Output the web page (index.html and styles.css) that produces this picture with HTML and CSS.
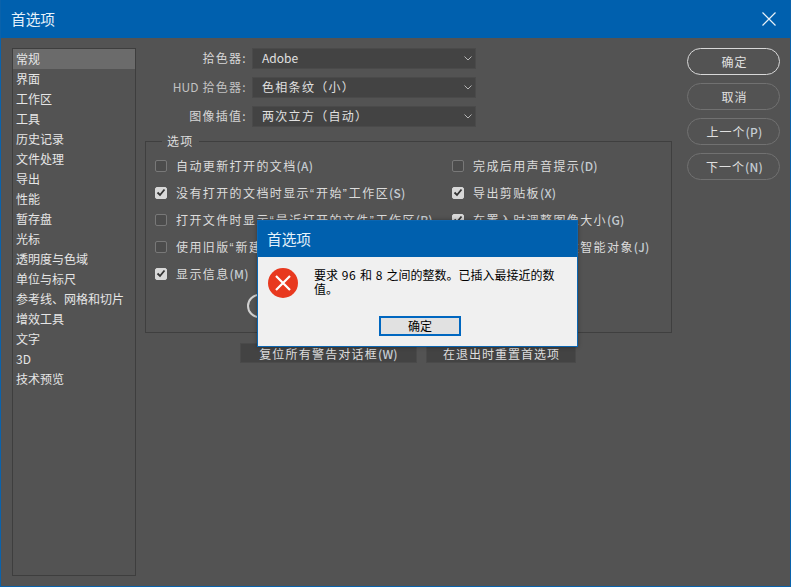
FILE: index.html
```html
<!DOCTYPE html>
<html lang="zh-CN">
<head>
<meta charset="utf-8">
<title>首选项</title>
<link rel="stylesheet" href="styles.css">
</head>
<body>
<div class="window">
  <header class="titlebar">
    <span class="title">首选项</span>
    <svg class="close" width="14" height="14" viewBox="0 0 14 14"><path d="M.5.5l13 13M13.5.5l-13 13" stroke="#e8f1f8" stroke-width="1.2" fill="none"/></svg>
  </header>
  <div class="main">
    <ul class="nav">
      <li class="nav-item selected">常规</li>
      <li class="nav-item">界面</li>
      <li class="nav-item">工作区</li>
      <li class="nav-item">工具</li>
      <li class="nav-item">历史记录</li>
      <li class="nav-item">文件处理</li>
      <li class="nav-item">导出</li>
      <li class="nav-item">性能</li>
      <li class="nav-item">暂存盘</li>
      <li class="nav-item">光标</li>
      <li class="nav-item">透明度与色域</li>
      <li class="nav-item">单位与标尺</li>
      <li class="nav-item">参考线、网格和切片</li>
      <li class="nav-item">增效工具</li>
      <li class="nav-item">文字</li>
      <li class="nav-item">3D</li>
      <li class="nav-item">技术预览</li>
    </ul>
    <section class="content">
      <div class="fields">
        <div class="field">
          <span class="field-label">拾色器:</span>
          <div class="select"><span class="select-text latin">Adobe</span><svg width="8" height="5" viewBox="0 0 8 5"><path d="M.5.5L4 4 7.500.5" stroke="#b5b5b5" fill="none"/></svg></div>
        </div>
        <div class="field">
          <span class="field-label dim"><span class="latin">HUD</span> 拾色器:</span>
          <div class="select"><span class="select-text">色相条纹（小）</span><svg width="8" height="5" viewBox="0 0 8 5"><path d="M.5.5L4 4 7.500.5" stroke="#b5b5b5" fill="none"/></svg></div>
        </div>
        <div class="field">
          <span class="field-label">图像插值:</span>
          <div class="select"><span class="select-text">两次立方（自动）</span><svg width="8" height="5" viewBox="0 0 8 5"><path d="M.5.5L4 4 7.500.5" stroke="#b5b5b5" fill="none"/></svg></div>
        </div>
      </div>
      <fieldset class="options">
        <legend class="legend">选项</legend>
        <div class="option-grid">
          <div class="opt"><span class="check"></span><span>自动更新打开的文档<b>(A)</b></span></div>
          <div class="opt"><span class="check"></span><span>完成后用声音提示<b>(D)</b></span></div>
          <div class="opt"><span class="check on"><svg width="10" height="9" viewBox="0 0 10 9"><path d="M1.500 4.500L4 7l4.500-5.500" stroke="#333" stroke-width="1.800" fill="none"/></svg></span><span>没有打开的文档时显示<span class="q">“</span>开始<span class="q">”</span>工作区<b>(S)</b></span></div>
          <div class="opt"><span class="check on"><svg width="10" height="9" viewBox="0 0 10 9"><path d="M1.500 4.500L4 7l4.500-5.500" stroke="#333" stroke-width="1.800" fill="none"/></svg></span><span>导出剪贴板<b>(X)</b></span></div>
          <div class="opt"><span class="check"></span><span>打开文件时显示<span class="q">“</span>最近打开的文件<span class="q">”</span>工作区<b>(R)</b></span></div>
          <div class="opt"><span class="check on"><svg width="10" height="9" viewBox="0 0 10 9"><path d="M1.500 4.500L4 7l4.500-5.500" stroke="#333" stroke-width="1.800" fill="none"/></svg></span><span>在置入时调整图像大小<b>(G)</b></span></div>
          <div class="opt"><span class="check"></span><span>使用旧版<span class="q">“</span>新建文档<span class="q">”</span>界面</span></div>
          <div class="opt"><span class="check"></span><span>在置入时始终创建智能对象<b>(J)</b></span></div>
          <div class="opt"><span class="check on"><svg width="10" height="9" viewBox="0 0 10 9"><path d="M1.500 4.500L4 7l4.500-5.500" stroke="#333" stroke-width="1.800" fill="none"/></svg></span><span>显示信息<b>(M)</b></span></div>
        </div>
        <div class="notice"><span class="info-ring"></span></div>
      </fieldset>
      <div class="resets">
        <div class="reset reset-warn">复位所有警告对话框<b>(W)</b></div>
        <div class="reset reset-prefs">在退出时重置首选项</div>
      </div>
    </section>
    <aside class="actions">
      <div class="pill primary">确定</div>
      <div class="pill">取消</div>
      <div class="pill">上一个<b>(P)</b></div>
      <div class="pill">下一个<b>(N)</b></div>
    </aside>
  </div>
  <div class="dialog">
    <div class="dialog-title">首选项</div>
    <div class="dialog-body">
      <div class="dialog-msg">
        <svg class="err" width="30" height="30" viewBox="0 0 30 30"><circle cx="15" cy="15" r="15" fill="#e8391f"/><path d="M8 8l14 14M22 8L8 22" stroke="#fff" stroke-width="2.200" fill="none"/></svg>
        <p class="dialog-text">要求 <span class="num">96</span> 和 <span class="num">8</span> 之间的整数。已插入最接近的数值。</p>
      </div>
      <div class="dialog-btn">确定</div>
    </div>
  </div>
</div>
</body>
</html>
```

FILE: styles.css
```css
* { box-sizing: border-box; }
html, body { margin: 0; padding: 0; }
body { font-family: "Noto Sans CJK SC", "Noto Sans", sans-serif; font-size: 12px; color: #dedede; background: #535353; }
b { font-weight: 500; color: #c4ccd2; letter-spacing: 0.2px; }

.window { position: relative; width: 791px; height: 587px; background: #535353; border: 1px solid #0a62ab; border-top: 0; overflow: hidden; }

.titlebar { height: 38px; background: #0060ae; display: flex; align-items: center; justify-content: space-between; padding: 0 14px 0 10px; }
.title { font-size: 14.67px; line-height: 38px; color: #e6f2fb; }

.main { display: flex; padding: 10px 10px 11px 11px; height: 548px; }

.nav { list-style: none; margin: 0 9px 0 0; padding: 0; width: 124px; height: 528px; border: 1px solid #3e3e3e; flex: none; }
.nav-item { height: 20px; line-height: 20px; padding-left: 3px; color: #e6e6e6; white-space: nowrap; }
.nav-item.selected { background: #6b6b6b; }

.content { width: 527px; flex: none; }
.fields { display: flex; flex-direction: column; gap: 8px; }
.field { display: flex; align-items: center; height: 21px; }
.field-label { width: 107px; padding: 0 5px 2px 0; text-align: right; letter-spacing: 1.3px; white-space: nowrap; color: #d6d6d6; }
.field-label.dim { color: #c2c2c2; }
.latin { letter-spacing: 0; }
.select { width: 224px; height: 21px; display: flex; align-items: center; justify-content: space-between; padding: 0 3px 0 9px; background: #434343; border: 1px solid #4a4a4a; letter-spacing: 1.3px; color: #e0e0e0; text-spacing-trim: space-all; }
.select-text { padding-bottom: 2px; }

.options { margin: 7px 0 0; padding: 0; width: 527px; height: 199px; border: 1px solid #3f3f3f; border-width: 1px; position: relative; min-width: 0; }
.legend { margin-left: 16px; padding: 0 5px; font-size: 12px; line-height: 14px; letter-spacing: 1.3px; color: #dedede; }
.option-grid { display: grid; grid-template-columns: 297px 1fr; grid-auto-rows: 27px; padding: 4px 0 0 9px; }
.opt { display: flex; align-items: center; gap: 9px; letter-spacing: 1.4px; white-space: nowrap; color: #dcdcdc; }
.q { font-family: "Liberation Sans", sans-serif; letter-spacing: 2px; }
.check { width: 12px; height: 12px; flex: none; border: 1px solid #787878; border-radius: 2px; background: #4c4c4c; display: flex; align-items: center; justify-content: center; }
.check.on { background: #d8d8d8; border-color: #d8d8d8; }
.notice { padding: 7px 0 0 101px; }
.info-ring { display: block; width: 24px; height: 24px; border: 2px solid #d0d0d0; border-radius: 50%; }

.resets { display: flex; margin: 10px 0 0 95px; gap: 9px; }
.reset { height: 20px; line-height: 20px; text-align: center; background: #434343; border: 1px solid #4a4a4a; letter-spacing: 1.2px; white-space: nowrap; }
.reset-warn { width: 177px; }
.reset-prefs { width: 150px; padding-left: 1px; letter-spacing: 1px; }

.actions { margin-left: 15px; width: 93px; display: flex; flex-direction: column; gap: 8px; flex: none; }
.pill { height: 27px; line-height: 25px; padding-left: 2px; text-align: center; border: 1px solid #717171; border-radius: 14px; letter-spacing: 1px; color: #e0e0e0; }
.pill.primary { border-color: #d8d8d8; }

.dialog { position: absolute; left: 256px; top: 220px; width: 321px; height: 127px; display: flex; flex-direction: column; background: #f0f0f0; border: 1px solid #0b66b2; color: #000; box-shadow: 0 0 4px rgba(0,0,0,.35); }
.dialog-title { height: 36px; flex: none; background: #0060ae; color: #e6f2fb; font-size: 14.67px; line-height: 36px; padding-left: 9px; }
.dialog-body { flex: 1; display: flex; flex-direction: column; align-items: center; }
.dialog-msg { align-self: stretch; display: flex; padding: 11px 22px 0 10px; height: 59px; gap: 16px; }
.err { flex: none; }
.dialog-text { margin: 0; width: 250px; flex: none; font-size: 12px; line-height: 14px; word-spacing: 1px; }
.num { letter-spacing: 0.6px; }
.dialog-btn { width: 82px; height: 20px; line-height: 16px; margin-left: 5px; text-align: center; background: #e1e1e1; border: 2px solid #0067c0; color: #000; }
```
